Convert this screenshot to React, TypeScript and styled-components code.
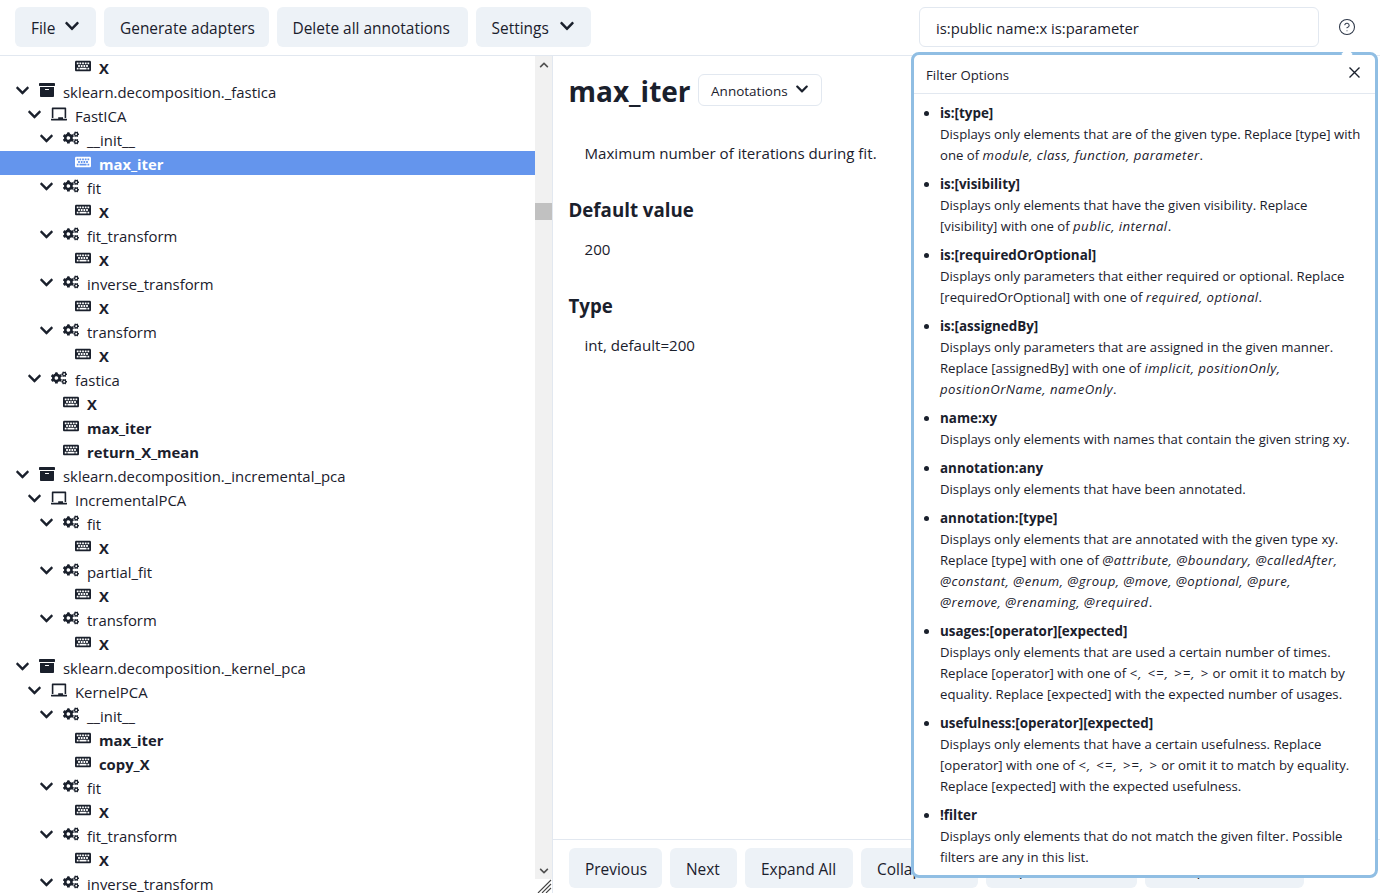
import React from "react";
import styled, { createGlobalStyle } from "styled-components";
import { FaArchive, FaChalkboard, FaChevronDown, FaCogs, FaKeyboard, FaChevronUp } from "react-icons/fa";
import { CircleHelp } from "lucide-react";

const Global = createGlobalStyle`
  html, body { margin: 0; padding: 0; height: 100%; overflow: hidden; background: #fff; }
  body { font-family: "Open Sans", "Noto Sans", sans-serif; font-size: 15px; color: #1a202c; }
  * { box-sizing: border-box; }
`;

const Page = styled.div`
  position: relative;
  width: 1380px;
  height: 893px;
  display: flex;
  flex-direction: column;
  overflow: hidden;
`;
const Header = styled.header`
  height: 56px;
  flex: none;
  display: flex;
  align-items: flex-start;
  padding: 7px 5px 0 15px;
  gap: 8px;
  border-bottom: 1px solid #e2e8f0;
`;
const Button = styled.button<{ $w: number }>`
  width: ${(p) => p.$w}px;
  height: 40px;
  padding: 2px 16px 0;
  border: 0;
  border-radius: 6px;
  background: #edf2f7;
  color: #1a202c;
  font: 500 15.45px "Open Sans", "Noto Sans", sans-serif;
  display: inline-flex;
  align-items: center;
  justify-content: space-between;
  flex: none;
  white-space: nowrap;
  svg { transform: translateY(-2px); }
`;
const Search = styled.div`
  margin-left: auto;
  width: 400px;
  height: 40px;
  border: 1px solid #e2e8f0;
  border-radius: 6px;
  display: flex;
  align-items: center;
  padding: 2px 0 0 16px;
  font-size: 14.8px;
  color: #1a202c;
`;
const Help = styled.div`
  width: 56px;
  height: 40px;
  flex: none;
  display: flex;
  align-items: center;
  justify-content: center;
  margin-left: -8px;
  color: #2d3748;
`;
const Body = styled.div`
  flex: 1;
  display: flex;
  min-height: 0;
`;
const TreePane = styled.div`
  width: 535px;
  flex: none;
  overflow: hidden;
  margin-top: -1px;
`;
const Row = styled.div<{ $level: number; $selected?: boolean; $leaf?: boolean }>`
  height: 24px;
  display: flex;
  align-items: center;
  padding: 2px 0 0 ${(p) => 15 + p.$level * 12}px;
  background: ${(p) => (p.$selected ? "#6495ed" : "transparent")};
  color: ${(p) => (p.$selected ? "#fff" : "#1a202c")};
  font-weight: ${(p) => (p.$leaf ? 700 : 400)};
  font-size: ${(p) => (p.$leaf ? "14.8px" : "14.9px")};
  white-space: nowrap;
`;
const Chevron = styled.span`
  width: 24px;
  flex: none;
  display: flex;
  font-size: 15px;
  transform: translateY(-2px);
`;
const NodeIcon = styled.span`
  width: 16px;
  margin-right: 8px;
  flex: none;
  display: flex;
  font-size: 16px;
  transform: translateY(-2px);
`;
const Scrollbar = styled.div`
  width: 17px;
  flex: none;
  background: #f1f1f1;
  position: relative;
`;
const ScrollThumb = styled.div`
  position: absolute;
  top: 147px;
  left: 0;
  width: 17px;
  height: 17px;
  background: #c1c1c1;
`;
const ScrollArrow = styled.div<{ $bottom?: boolean }>`
  position: absolute;
  left: 0;
  width: 17px;
  height: 17px;
  ${(p) => (p.$bottom ? "bottom: 14px;" : "top: 0;")}
  display: flex;
  align-items: center;
  justify-content: center;
  color: #505050;
  font-size: 10px;
`;
const Grip = styled.svg`
  position: absolute;
  right: 0;
  bottom: 0;
  background: #fff;
`;
const Main = styled.main`
  flex: 1;
  min-width: 0;
  display: flex;
  flex-direction: column;
  border-left: 1px solid #e2e8f0;
`;
const Detail = styled.div`
  flex: 1;
  padding: 16px 16px 0 15.5px;
`;
const TitleRow = styled.div`
  display: flex;
  align-items: center;
  gap: 7.5px;
  height: 40px;
  margin-bottom: 29px;
`;
const Title = styled.h1`
  margin: 0 0 2px;
  font-size: 28px;
  font-weight: 700;
  line-height: 38px;
`;
const SmallButton = styled.div`
  height: 32px;
  width: 124px;
  padding: 1px 12px 0 12px;
  border: 1px solid #e2e8f0;
  border-radius: 6px;
  display: flex;
  align-items: center;
  justify-content: space-between;
  font-size: 13.5px;
  font-weight: 500;
  transform: translateY(-2px);
  svg { transform: translateY(-2px); }
`;
const Section = styled.h2`
  margin: 0 0 12px;
  font-size: 18.7px;
  font-weight: 700;
  line-height: 30px;
`;
const Para = styled.p<{ $gap: number }>`
  margin: 0 0 ${(p) => p.$gap}px;
  padding: 0 16px;
  line-height: 24px;
  font-size: 15.1px;
  color: #1a202c;
`;
const Footer = styled.footer`
  height: 54px;
  flex: none;
  border-top: 1px solid #e2e8f0;
  display: flex;
  padding: 8px 16px 0;
  gap: 8px;
`;
const Popover = styled.section`
  position: absolute;
  left: 911px;
  top: 52px;
  width: 467px;
  height: 826px;
  border: 3px solid #90bee3;
  border-radius: 8px;
  background: #fff;
`;
const PopArrow = styled.div`
  position: absolute;
  top: -5px;
  left: 429px;
  width: 8px;
  height: 8px;
  background: #fff;
  transform: rotate(45deg);
`;
const PopHead = styled.div`
  height: 39px;
  padding: 2px 15px 0 12px;
  border-bottom: 1px solid #e2e8f0;
  display: flex;
  align-items: center;
  justify-content: space-between;
  font-size: 13.2px;
  svg { transform: translateY(-3px); }
`;
const PopList = styled.ul`
  margin: 0;
  padding: 9px 12px 0 26px;
  font-size: 13.17px;
  line-height: 21px;
  em { letter-spacing: 0.45px; }
`;
const PopItem = styled.li`
  margin-bottom: 8px;
  color: #1a202c;
  strong { display: block; font-weight: 700; font-size: 13.4px; }
`;
const Ops = styled.em`
  && { letter-spacing: 1.2px; }
`;
const KeepTogether = styled.span`
  white-space: nowrap;
`;

type N = [number, string, string, boolean?];
const rows: N[] = [
  [3, "k", "X"], [0, "a", "sklearn.decomposition._fastica"], [1, "c", "FastICA"], [2, "f", "__init__"],
  [3, "k", "max_iter", true], [2, "f", "fit"], [3, "k", "X"], [2, "f", "fit_transform"], [3, "k", "X"],
  [2, "f", "inverse_transform"], [3, "k", "X"], [2, "f", "transform"], [3, "k", "X"], [1, "f", "fastica"],
  [2, "k", "X"], [2, "k", "max_iter"], [2, "k", "return_X_mean"],
  [0, "a", "sklearn.decomposition._incremental_pca"], [1, "c", "IncrementalPCA"], [2, "f", "fit"], [3, "k", "X"],
  [2, "f", "partial_fit"], [3, "k", "X"], [2, "f", "transform"], [3, "k", "X"],
  [0, "a", "sklearn.decomposition._kernel_pca"], [1, "c", "KernelPCA"], [2, "f", "__init__"], [3, "k", "max_iter"],
  [3, "k", "copy_X"], [2, "f", "fit"], [3, "k", "X"], [2, "f", "fit_transform"], [3, "k", "X"], [2, "f", "inverse_transform"],
];

const icon = (t: string) =>
  t === "a" ? <FaArchive /> : t === "c" ? <FaChalkboard /> : t === "f" ? <FaCogs /> : <FaKeyboard />;

const filters: [string, React.ReactNode][] = [
  ["is:[type]", <>Displays only elements that are of the given type. Replace [type] with one of <em>module, class, function, parameter</em>.</>],
  ["is:[visibility]", <>Displays only elements that have the given visibility. Replace [visibility] with one of <em>public, internal</em>.</>],
  ["is:[requiredOrOptional]", <>Displays only parameters that either required or optional. Replace [requiredOrOptional] with one of <em>required, optional</em>.</>],
  ["is:[assignedBy]", <>Displays only parameters that are assigned in the given manner. Replace [assignedBy] with one of <em>implicit, positionOnly, positionOrName, nameOnly</em>.</>],
  ["name:xy", <>Displays only elements with names that contain the given string xy.</>],
  ["annotation:any", <>Displays only elements that have been annotated.</>],
  ["annotation:[type]", <>Displays only elements that are annotated with the given type xy. Replace [type] with one of <em>@attribute, @boundary, @calledAfter, @constant, @enum, @group, @move, @optional, @pure, <KeepTogether>@remove, @renaming, @required</KeepTogether></em>.</>],
  ["usages:[operator][expected]", <>Displays only elements that are used a certain number of times. Replace [operator] with one of <Ops>&lt;, &lt;=, &gt;=, &gt;</Ops> or omit it to match by equality. Replace [expected] with the expected number of usages.</>],
  ["usefulness:[operator][expected]", <>Displays only elements that have a certain usefulness. Replace [operator] with one of <Ops>&lt;, &lt;=, &gt;=, &gt;</Ops> or omit it to match by equality. Replace [expected] with the expected usefulness.</>],
  ["!filter", <>Displays only elements that do not match the given filter. Possible filters are any in this list.</>],
];

export default function App() {
  return (
    <Page>
      <Global />
      <Header>
        <Button $w={81}>File <FaChevronDown size={16} /></Button>
        <Button $w={164.5}>Generate adapters</Button>
        <Button $w={191}>Delete all annotations</Button>
        <Button $w={115}>Settings <FaChevronDown size={16} /></Button>
        <Search>is:public name:x is:parameter</Search>
        <Help><CircleHelp size={18} strokeWidth={1.4} /></Help>
      </Header>
      <Body>
        <TreePane>
          {rows.map(([lvl, t, name, sel], i) => (
            <Row key={i} $level={lvl} $selected={sel} $leaf={t === "k"}>
              <Chevron>{t !== "k" ? <FaChevronDown /> : null}</Chevron>
              <NodeIcon>{icon(t)}</NodeIcon>
              <span>{name}</span>
            </Row>
          ))}
        </TreePane>
        <Scrollbar>
          <ScrollArrow><FaChevronUp /></ScrollArrow>
          <ScrollThumb />
          <ScrollArrow $bottom><FaChevronDown /></ScrollArrow>
          <Grip width="17" height="14" viewBox="0 0 17 14"><path d="M3 14L16 1M7 14L16 5M11 14L16 9" stroke="#444" strokeWidth="1.1" /></Grip>
        </Scrollbar>
        <Main>
          <Detail>
            <TitleRow>
              <Title>max_iter</Title>
              <SmallButton>Annotations <FaChevronDown size={14} /></SmallButton>
            </TitleRow>
            <Para $gap={30}>Maximum number of iterations during fit.</Para>
            <Section>Default value</Section>
            <Para $gap={30}>200</Para>
            <Section>Type</Section>
            <Para $gap={0}>int, default=200</Para>
          </Detail>
          <Footer>
            <Button $w={93}>Previous</Button>
            <Button $w={67}>Next</Button>
            <Button $w={108}>Expand All</Button>
            <Button $w={117}>Collapse All</Button>
            <Button $w={151}>Expand Selected</Button>
            <Button $w={159}>Collapse Selected</Button>
          </Footer>
        </Main>
      </Body>
      <Popover>
        <PopArrow />
        <PopHead>
          <span>Filter Options</span>
          <svg width="11" height="11" viewBox="0 0 11 11"><path d="M.5 .5L10.5 10.5M10.5 .5L.5 10.5" stroke="#1a202c" strokeWidth="1.4" /></svg>
        </PopHead>
        <PopList>
          {filters.map(([k, d]) => (
            <PopItem key={k}><strong>{k}</strong>{d}</PopItem>
          ))}
        </PopList>
      </Popover>
    </Page>
  );
}
